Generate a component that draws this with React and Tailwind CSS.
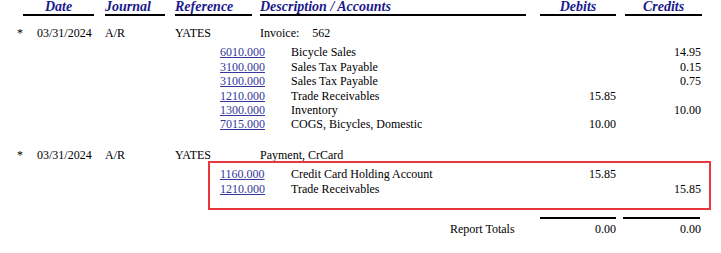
import React from 'react';

const serif = { fontFamily: '"Liberation Serif", "Times New Roman", serif' };

const groups = [
  {
    date: '03/31/2024',
    journal: 'A/R',
    reference: 'YATES',
    desc: (
      <>
        <span>Invoice:</span>
        <span className="ml-[13px]">562</span>
      </>
    ),
    lines: [
      { acct: '6010.000', name: 'Bicycle Sales', debit: '', credit: '14.95' },
      { acct: '3100.000', name: 'Sales Tax Payable', debit: '', credit: '0.15' },
      { acct: '3100.000', name: 'Sales Tax Payable', debit: '', credit: '0.75' },
      { acct: '1210.000', name: 'Trade Receivables', debit: '15.85', credit: '' },
      { acct: '1300.000', name: 'Inventory', debit: '', credit: '10.00' },
      { acct: '7015.000', name: 'COGS, Bicycles, Domestic', debit: '10.00', credit: '' },
    ],
  },
  {
    date: '03/31/2024',
    journal: 'A/R',
    reference: 'YATES',
    desc: <span>Payment, CrCard</span>,
    highlight: true,
    lines: [
      { acct: '1160.000', name: 'Credit Card Holding Account', debit: '15.85', credit: '' },
      { acct: '1210.000', name: 'Trade Receivables', debit: '', credit: '15.85' },
    ],
  },
];

const HeaderCell = ({ label, className }) => (
  <div
    className={`h-[16px] border-b-2 border-black text-[14px] leading-[14px] font-bold italic text-[#1a1a8c] whitespace-nowrap ${className}`}
  >
    {label}
  </div>
);

const AccountRow = ({ line }) => (
  <div className="flex h-[14.4px] leading-[14.4px]">
    <a href="#" className="w-[71px] ml-[220px] text-[#36369c] underline underline-offset-[1px]">
      {line.acct}
    </a>
    <div className="w-[249px]">{line.name}</div>
    <div className="w-[76px] text-right">{line.debit}</div>
    <div className="w-[85px] text-right">{line.credit}</div>
  </div>
);

const Group = ({ g, className }) => (
  <div className={`relative ${className}`}>
    <div className="flex h-[14.4px] leading-[14.4px]">
      <div className="w-[37px] pl-[17px]">*</div>
      <div className="w-[68px]">{g.date}</div>
      <div className="w-[70px]">{g.journal}</div>
      <div className="w-[85px]">{g.reference}</div>
      <div className="flex">{g.desc}</div>
    </div>
    <div className="relative mt-[5px]">
      {g.lines.map((line, i) => (
        <AccountRow key={i} line={line} />
      ))}
      {g.highlight && (
        <div className="absolute left-[208px] top-[-6px] w-[503px] h-[49px] border-2 border-[#e8383d] pointer-events-none" />
      )}
    </div>
  </div>
);

export default function App() {
  return (
    <div className="w-[721px] h-[253px] bg-white text-black text-[12px] overflow-hidden" style={serif}>
      <div className="flex">
        <HeaderCell label="Date" className="ml-[23px] w-[71px] text-center" />
        <HeaderCell label="Journal" className="ml-[11px] w-[60px]" />
        <HeaderCell label="Reference" className="ml-[10px] w-[77px]" />
        <HeaderCell label="Description / Accounts" className="ml-[8px] w-[266px]" />
        <HeaderCell label="Debits" className="ml-[14px] w-[76px] text-center" />
        <HeaderCell label="Credits" className="ml-[9px] w-[77px] text-center" />
      </div>

      <Group g={groups[0]} className="mt-[10px]" />
      <Group g={groups[1]} className="mt-[16px]" />

      <div className="flex mt-[21px]">
        <div className="ml-[540px] w-[76px] border-t-2 border-black" />
        <div className="ml-[7px] w-[77px] border-t-2 border-black" />
      </div>
      <div className="flex mt-[3px] h-[14.4px] leading-[14.4px]">
        <div className="ml-[450px] w-[90px]">Report Totals</div>
        <div className="w-[76px] text-right">0.00</div>
        <div className="w-[85px] text-right">0.00</div>
      </div>
    </div>
  );
}
